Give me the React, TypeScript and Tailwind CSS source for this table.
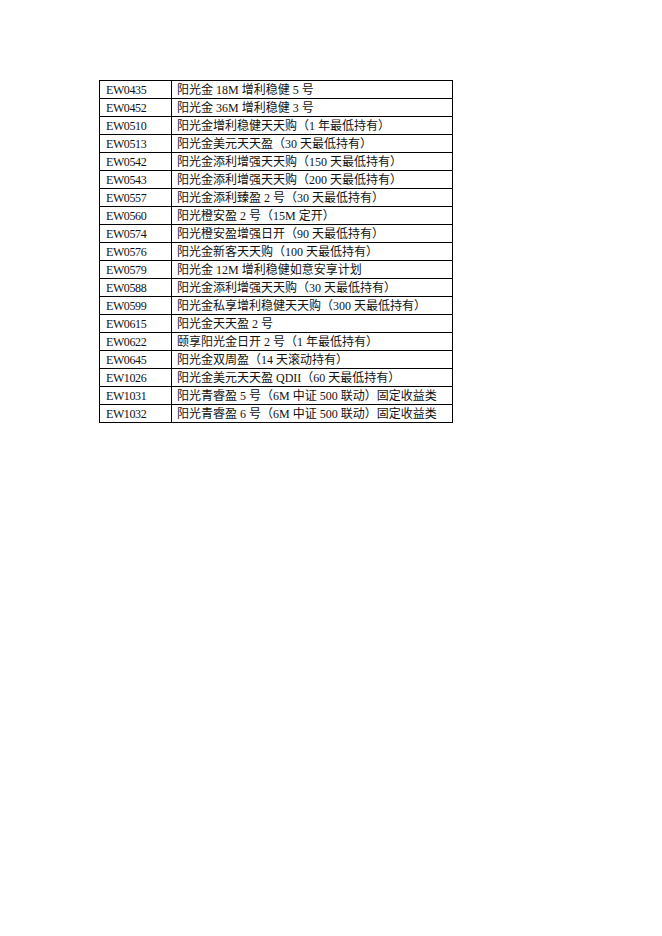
const rows: [string, string][] = [
  ['EW0435', '阳光金 18M 增利稳健 5 号'],
  ['EW0452', '阳光金 36M 增利稳健 3 号'],
  ['EW0510', '阳光金增利稳健天天购（1 年最低持有）'],
  ['EW0513', '阳光金美元天天盈（30 天最低持有）'],
  ['EW0542', '阳光金添利增强天天购（150 天最低持有）'],
  ['EW0543', '阳光金添利增强天天购（200 天最低持有）'],
  ['EW0557', '阳光金添利臻盈 2 号（30 天最低持有）'],
  ['EW0560', '阳光橙安盈 2 号（15M 定开）'],
  ['EW0574', '阳光橙安盈增强日开（90 天最低持有）'],
  ['EW0576', '阳光金新客天天购（100 天最低持有）'],
  ['EW0579', '阳光金 12M 增利稳健如意安享计划'],
  ['EW0588', '阳光金添利增强天天购（30 天最低持有）'],
  ['EW0599', '阳光金私享增利稳健天天购（300 天最低持有）'],
  ['EW0615', '阳光金天天盈 2 号'],
  ['EW0622', '颐享阳光金日开 2 号（1 年最低持有）'],
  ['EW0645', '阳光金双周盈（14 天滚动持有）'],
  ['EW1026', '阳光金美元天天盈 QDII（60 天最低持有）'],
  ['EW1031', '阳光青睿盈 5 号（6M 中证 500 联动）固定收益类'],
  ['EW1032', '阳光青睿盈 6 号（6M 中证 500 联动）固定收益类'],
];

export default function App() {
  return (
    <div className="min-h-[936px] w-[662px] bg-white pt-[80px] pl-[99px]">
      <table
        className="border-collapse text-[12px] text-[#111]"
        style={{ fontFamily: '"Liberation Serif", "Noto Sans CJK SC", serif' }}
      >
        <tbody>
          {rows.map(([code, name]) => (
            <tr key={code} className="h-[18px]">
              <td className="w-[72px] border border-black px-[6px] py-0 leading-[16px] tracking-[-0.4px] whitespace-nowrap">
                {code}
              </td>
              <td className="w-[281px] border border-black px-[5px] py-0 leading-[16px] whitespace-nowrap">
                {name}
              </td>
            </tr>
          ))}
        </tbody>
      </table>
    </div>
  );
}
